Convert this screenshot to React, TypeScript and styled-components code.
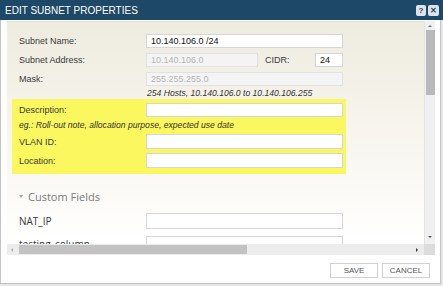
import React from 'react';
import styled, { createGlobalStyle } from 'styled-components';

const GlobalStyle = createGlobalStyle`
  html, body {
    margin: 0;
    padding: 0;
    background: #e6e6e6;
  }
  body {
    width: 443px;
    height: 286px;
    overflow: hidden;
    font-family: 'Liberation Sans', Arial, sans-serif;
  }
`;

const Dialog = styled.div`
  width: 439px;
  height: 283px;
  background: #fff;
  border: 1px solid #c4c4c4;
  border-top: none;
  display: flex;
  flex-direction: column;
`;

const TitleBar = styled.div`
  height: 20px;
  margin: 0 -3px 0 -1px;
  padding: 0 4px 0 5px;
  background: #1d4867;
  display: flex;
  align-items: center;
  justify-content: space-between;
`;

const Title = styled.div`
  color: #fff;
  font-size: 10px;
  letter-spacing: 0;
`;

const TitleButtons = styled.div`
  display: flex;
  gap: 2px;
`;

const TitleButton = styled.div<{ $wide?: boolean }>`
  width: ${(p) => (p.$wide ? 11 : 10)}px;
  height: 11px;
  background: #dfe3e7;
  border-radius: 2px;
  color: #1d4867;
  font-size: 8px;
  font-weight: bold;
  display: flex;
  align-items: center;
  justify-content: center;
`;

const Body = styled.div`
  padding: 1px 4px 0 6px;
`;

const ScrollFrame = styled.div`
  display: grid;
  grid-template-columns: 417px 11px;
  grid-template-rows: 223px 11px;
`;

const Content = styled.div`
  overflow: hidden;
  background: linear-gradient(#eeebdf 0%, #f6f4ec 45%, #ffffff 100%);
  border-top: 1px solid #e2dfd3;
  padding: 12px 0 0 5px;
  box-sizing: border-box;
`;

const Row = styled.div<{ $gap?: number }>`
  display: flex;
  align-items: center;
  padding-left: 7px;
  margin-bottom: ${(p) => p.$gap ?? 5}px;
`;

const Label = styled.div<{ $modern?: boolean }>`
  width: 127px;
  flex: none;
  font-size: ${(p) => (p.$modern ? 10 : 9)}px;
  font-family: ${(p) => (p.$modern ? "'Open Sans', sans-serif" : "'Liberation Sans', Arial, sans-serif")};
  color: #3a3a3a;
`;

const Input = styled.div<{ $w?: number; $disabled?: boolean; $h?: number }>`
  width: ${(p) => p.$w ?? 197}px;
  height: ${(p) => p.$h ?? 14}px;
  box-sizing: border-box;
  border: 1px solid ${(p) => (p.$disabled ? '#e2e2e2' : '#d6d6d6')};
  background: ${(p) => (p.$disabled ? '#f4f4f4' : '#fff')};
  color: ${(p) => (p.$disabled ? '#b4b4b4' : '#111')};
  font-size: 9px;
  padding-left: 4px;
  display: flex;
  align-items: center;
  flex: none;
`;

const InlineLabel = styled.div`
  width: 50px;
  padding-left: 7px;
  font-size: 9px;
  color: #3a3a3a;
`;

const Hint = styled.div<{ $indent: number }>`
  padding-left: ${(p) => p.$indent}px;
  font-size: 8.6px;
  font-style: italic;
  color: #333;
  height: 11px;
  line-height: 11px;
`;

const Highlight = styled.div`
  width: 334px;
  padding: 4px 0 6px;
  background: #fbf75e;
`;

const SectionHeader = styled.div`
  display: flex;
  align-items: center;
  gap: 5px;
  padding-left: 7px;
  margin: 15px 0 9px;
  font-family: 'Open Sans', sans-serif;
  font-size: 11px;
  color: #7a7a7a;
`;

const Caret = styled.span`
  width: 0;
  height: 0;
  border-left: 2.5px solid transparent;
  border-right: 2.5px solid transparent;
  border-top: 3px solid #aaa;
`;

const VScroll = styled.div`
  background: #f0f0f0;
  border-left: 1px solid #e4e4e4;
  display: flex;
  flex-direction: column;
  align-items: center;
`;

const HScroll = styled.div`
  background: #ececec;
  display: flex;
  align-items: center;
`;

const Corner = styled.div`
  background: #dcdcdc;
`;

const Arrow = styled.span<{ $dir: 'up' | 'down' | 'left' | 'right' }>`
  width: 0;
  height: 0;
  flex: none;
  ${(p) =>
    p.$dir === 'up'
      ? 'border-left: 2px solid transparent; border-right: 2px solid transparent; border-bottom: 2px solid #777;'
      : p.$dir === 'down'
      ? 'border-left: 2px solid transparent; border-right: 2px solid transparent; border-top: 2px solid #555;'
      : p.$dir === 'left'
      ? 'border-top: 2px solid transparent; border-bottom: 2px solid transparent; border-right: 2px solid #aaa;'
      : 'border-top: 2px solid transparent; border-bottom: 2px solid transparent; border-left: 2px solid #333;'}
`;

const VThumb = styled.div`
  width: 9px;
  height: 65px;
  margin-top: 3px;
  background: #b9b9b9;
`;

const HThumb = styled.div`
  width: 228px;
  height: 9px;
  margin-left: 6px;
  background: #c2c2c2;
`;

const Footer = styled.div`
  flex: 1;
  display: flex;
  align-items: flex-start;
  justify-content: flex-end;
  gap: 4px;
  padding: 8px 10px 0 0;
`;

const Button = styled.div`
  width: 48px;
  height: 15px;
  box-sizing: border-box;
  border: 1px solid #d0d0d0;
  background: #fff;
  color: #555;
  font-size: 8px;
  display: flex;
  align-items: center;
  justify-content: center;
`;

export default function App() {
  return (
    <>
      <GlobalStyle />
      <Dialog>
        <TitleBar>
          <Title>EDIT SUBNET PROPERTIES</Title>
          <TitleButtons>
            <TitleButton>?</TitleButton>
            <TitleButton $wide>✕</TitleButton>
          </TitleButtons>
        </TitleBar>
        <Body>
          <ScrollFrame>
            <Content>
              <Row>
                <Label>Subnet Name:</Label>
                <Input>10.140.106.0 /24</Input>
              </Row>
              <Row>
                <Label>Subnet Address:</Label>
                <Input $w={112} $disabled>
                  10.140.106.0
                </Input>
                <InlineLabel>CIDR:</InlineLabel>
                <Input $w={28}>24</Input>
              </Row>
              <Row $gap={2}>
                <Label>Mask:</Label>
                <Input $disabled>255.255.255.0</Input>
              </Row>
              <Hint $indent={135}>254 Hosts, 10.140.106.0 to 10.140.106.255</Hint>
              <Highlight>
                <Row $gap={3}>
                  <Label>Description:</Label>
                  <Input $h={14} />
                </Row>
                <Hint $indent={7}>eg.: Roll-out note, allocation purpose, expected use date</Hint>
                <Row $gap={4} style={{ marginTop: 3 }}>
                  <Label>VLAN ID:</Label>
                  <Input $h={15} />
                </Row>
                <Row $gap={0}>
                  <Label>Location:</Label>
                  <Input $h={15} />
                </Row>
              </Highlight>
              <SectionHeader>
                <Caret />
                Custom Fields
              </SectionHeader>
              <Row $gap={7}>
                <Label $modern>NAT_IP</Label>
                <Input $h={16} />
              </Row>
              <Row>
                <Label $modern>testing_column</Label>
                <Input $h={16} />
              </Row>
            </Content>
            <VScroll>
              <div style={{ height: 4 }} />
              <Arrow $dir="up" />
              <VThumb />
              <div style={{ flex: 1 }} />
              <Arrow $dir="down" />
              <div style={{ height: 6 }} />
            </VScroll>
            <HScroll>
              <div style={{ width: 4 }} />
              <Arrow $dir="left" />
              <HThumb />
              <div style={{ flex: 1 }} />
              <Arrow $dir="right" />
              <div style={{ width: 6 }} />
            </HScroll>
            <Corner />
          </ScrollFrame>
        </Body>
        <Footer>
          <Button>SAVE</Button>
          <Button>CANCEL</Button>
        </Footer>
      </Dialog>
    </>
  );
}
